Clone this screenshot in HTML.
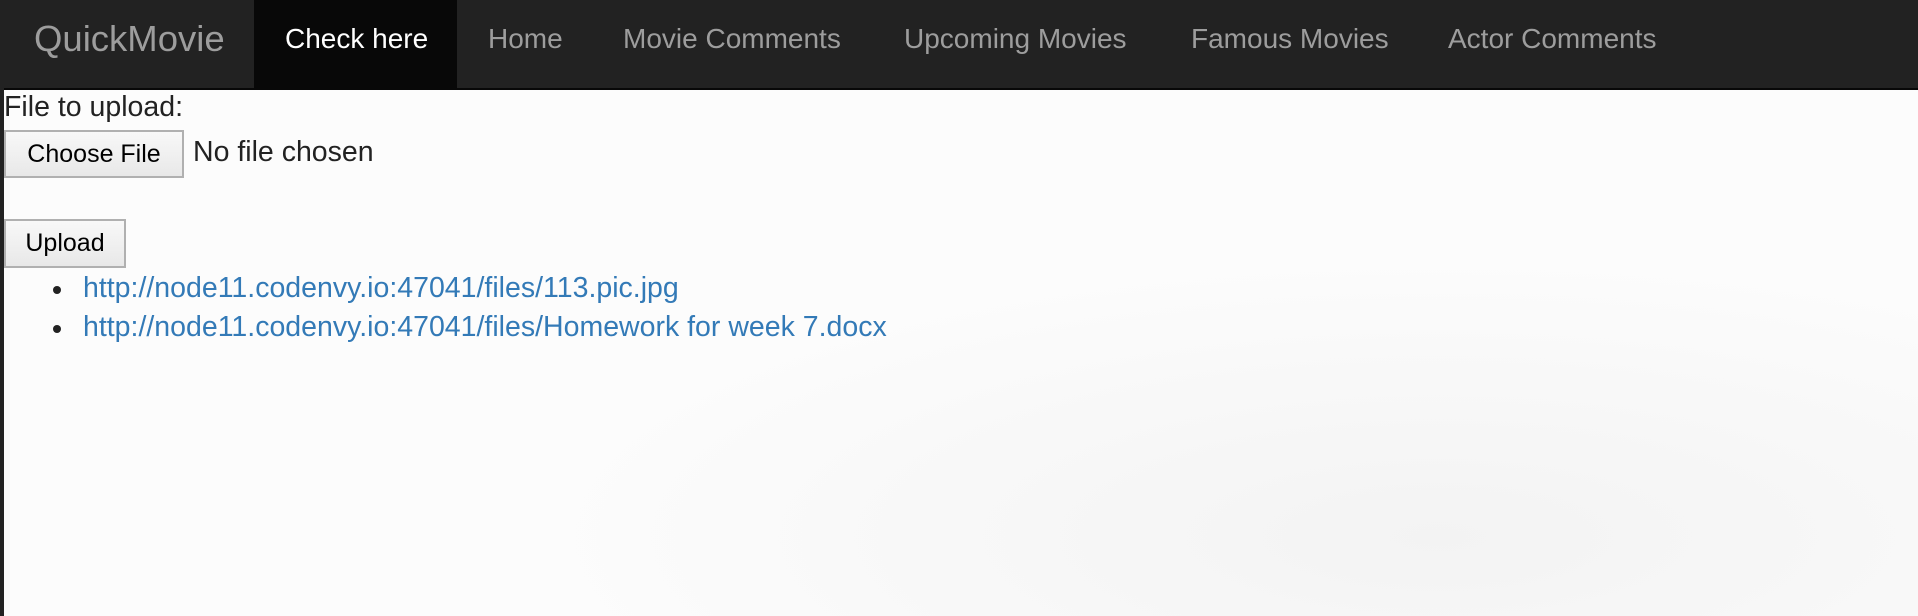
<!DOCTYPE html>
<html><head><meta charset="utf-8"><style>
html,body{margin:0;padding:0;width:1918px;height:616px;overflow:hidden;background:#fcfcfc;font-family:"Liberation Sans",Arial,sans-serif;}
.bgl{position:absolute;left:0;top:0;width:4px;height:616px;background:#222;}
.nav{position:absolute;left:0;top:0;width:1918px;height:88px;background:#222;border-bottom:2px solid #080808;}
.nav span{position:absolute;top:0;line-height:78px;font-size:28px;color:#9d9d9d;white-space:nowrap;}
.brand{font-size:36.5px!important;left:34px;}
.active{position:absolute;left:254px;top:0;width:203px;height:88px;background:#080808;}
.t{position:absolute;white-space:nowrap;font-size:28.5px;color:#222;}
.btn{position:absolute;background:linear-gradient(#f8f8f8,#e8e8e8);border:2px solid #b0b0b0;box-sizing:border-box;font-size:25px;color:#000;text-align:center;}
a{color:#337ab7;text-decoration:none;}
.dot{position:absolute;width:8px;height:8px;border-radius:50%;background:#222;}
</style></head><body>
<div style="position:absolute;left:0;top:90px;width:1918px;height:526px;background:radial-gradient(ellipse at 75% 85%,#f3f3f3,#fcfcfc 45%);"></div>
<div class="nav">
<div class="active"></div>
<span class="brand">QuickMovie</span>
<span style="left:285px;color:#fff">Check here</span>
<span style="left:488px">Home</span>
<span style="left:623px">Movie Comments</span>
<span style="left:904px">Upcoming Movies</span>
<span style="left:1191px">Famous Movies</span>
<span style="left:1448px">Actor Comments</span>
</div>
<div class="bgl"></div>
<div class="t" style="left:4px;top:91px;">File to upload:</div>
<div class="btn" style="left:4px;top:130px;width:180px;height:48px;line-height:44px;">Choose File</div>
<div class="t" style="left:193px;top:136px;">No file chosen</div>
<div class="btn" style="left:4px;top:219px;width:122px;height:49px;line-height:45px;">Upload</div>
<div class="dot" style="left:53px;top:286px;"></div>
<div class="t" style="left:83px;top:272px;"><a>http://node11.codenvy.io:47041/files/113.pic.jpg</a></div>
<div class="dot" style="left:53px;top:325px;"></div>
<div class="t" style="left:83px;top:311px;"><a>http://node11.codenvy.io:47041/files/Homework for week 7.docx</a></div>
</body></html>
